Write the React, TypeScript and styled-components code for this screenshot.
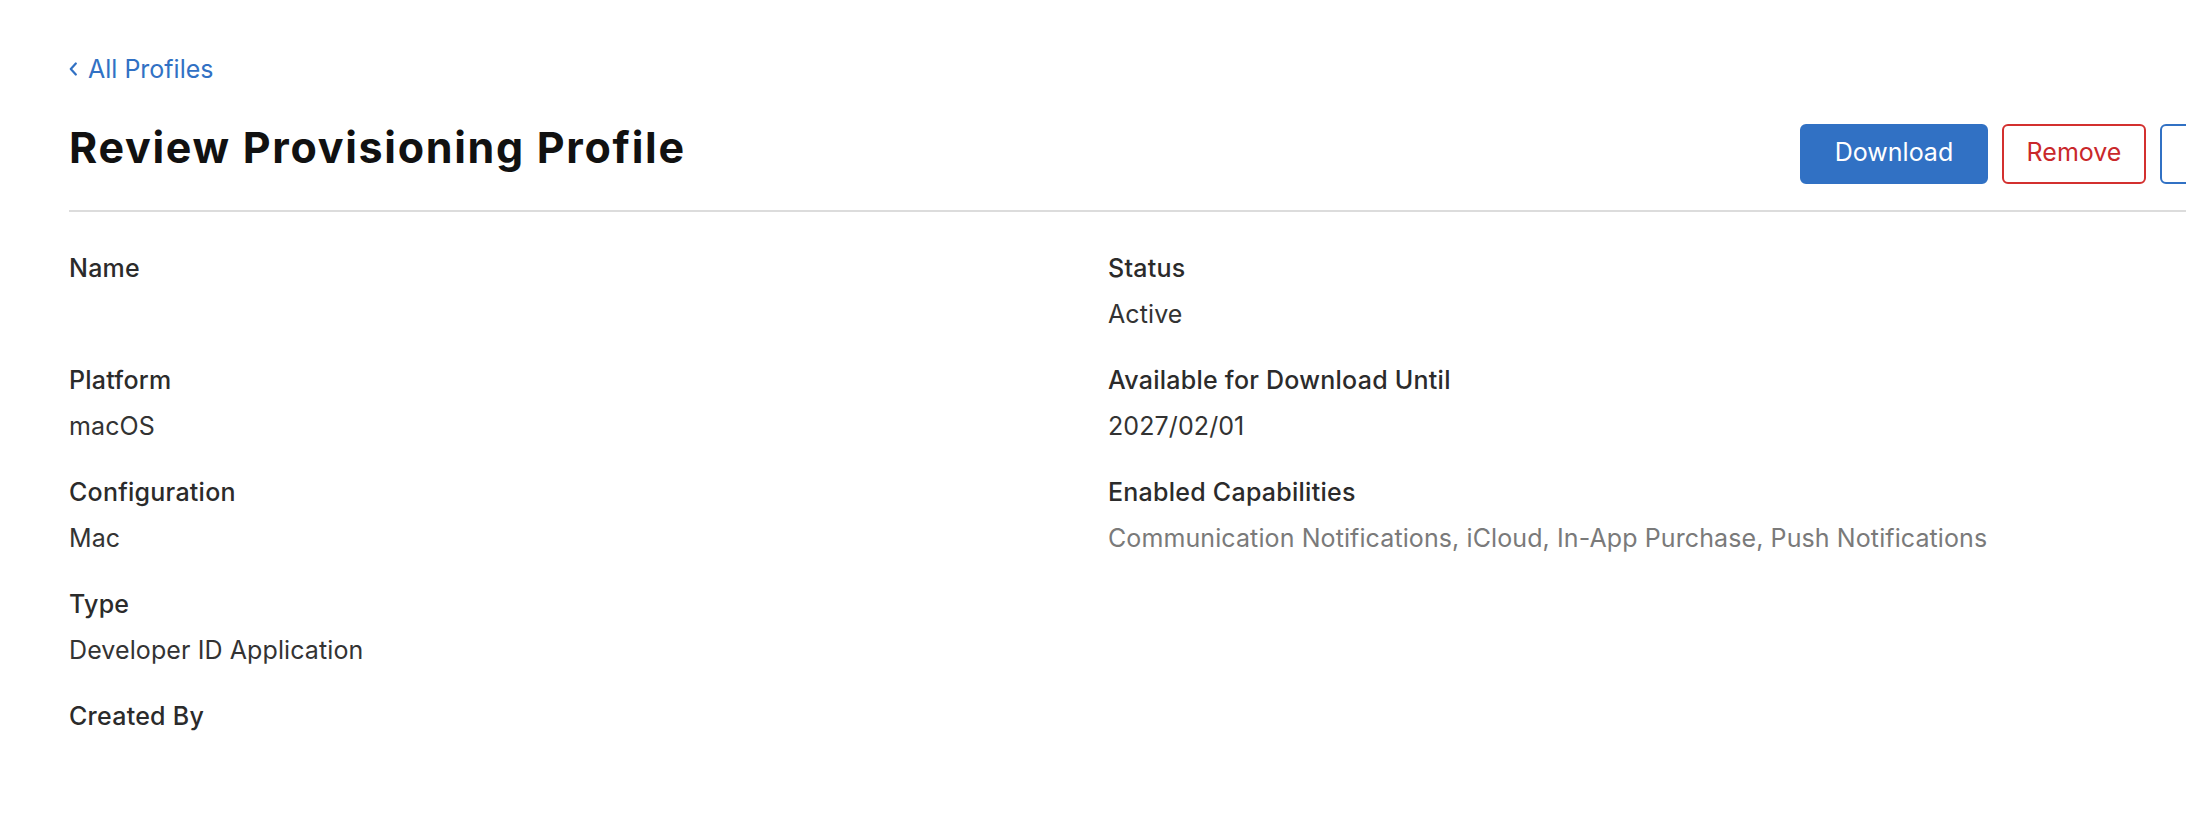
import React from "react";
import styled, { createGlobalStyle } from "styled-components";

const GlobalStyle = createGlobalStyle`
  html, body {
    margin: 0;
    padding: 0;
    background: #ffffff;
    overflow: hidden;
  }
  body {
    font-family: Inter, "Open Sans", "Liberation Sans", sans-serif;
    -webkit-font-smoothing: antialiased;
  }
`;

const Page = styled.main`
  box-sizing: border-box;
  width: 2300px;
  padding: 54px 30px 0 69px;
`;

const BackLink = styled.a`
  display: inline-flex;
  align-items: center;
  gap: 11px;
  height: 30px;
  font-size: 25px;
  line-height: 30px;
  color: #3171c4;
  text-decoration: none;
  cursor: pointer;
`;

const Header = styled.header`
  display: flex;
  align-items: flex-start;
  justify-content: space-between;
  margin-top: 38px;
  padding-bottom: 26px;
  border-bottom: 2px solid #dcdcdc;
`;

const Title = styled.h1`
  margin: 0;
  font-size: 43px;
  line-height: 50px;
  font-weight: 700;
  color: #111111;
  letter-spacing: 1.7px;
`;

const Actions = styled.div`
  display: flex;
  gap: 14px;
  margin-top: 2px;
`;

type Variant = "primary" | "danger" | "outline";

const colors: Record<Variant, { bg: string; border: string; fg: string }> = {
  primary: { bg: "#3171c4", border: "#3171c4", fg: "#ffffff" },
  danger: { bg: "#ffffff", border: "#d3302f", fg: "#c9282b" },
  outline: { bg: "#ffffff", border: "#3171c4", fg: "#3171c4" },
};

const Button = styled.button<{ $variant: Variant; $width: number }>`
  box-sizing: border-box;
  width: ${(p) => p.$width}px;
  height: 60px;
  padding: 0 0 3px;
  border-radius: 6px;
  border: 2px solid ${(p) => colors[p.$variant].border};
  background: ${(p) => colors[p.$variant].bg};
  color: ${(p) => colors[p.$variant].fg};
  font-family: inherit;
  font-size: 25px;
  line-height: 53px;
  cursor: pointer;
`;

const Details = styled.section`
  display: grid;
  grid-template-columns: 1039px 1fr;
  padding-top: 33px;
`;

const Column = styled.div`
  display: flex;
  flex-direction: column;
  gap: 20px;
`;

const Field = styled.div`
  display: flex;
  flex-direction: column;
`;

const Label = styled.div`
  font-size: 25px;
  line-height: 46px;
  height: 46px;
  color: #2b2b2b;
  font-weight: 500;
  letter-spacing: 0.25px;
`;

const Value = styled.div<{ $muted?: boolean }>`
  font-size: 25px;
  line-height: 46px;
  height: 46px;
  color: ${(p) => (p.$muted ? "#7a7a7a" : "#333333")};
  letter-spacing: 0.1px;
  white-space: nowrap;
`;

const Chevron = () => (
  <svg width="8" height="14" viewBox="0 0 8 14" aria-hidden="true">
    <polyline
      points="6.8,1.5 1.8,7 6.8,12.5"
      fill="none"
      stroke="#3171c4"
      strokeWidth="2.2"
      strokeLinecap="round"
      strokeLinejoin="round"
    />
  </svg>
);

type Item = { label: string; value?: string; muted?: boolean };

const left: Item[] = [
  { label: "Name", value: "" },
  { label: "Platform", value: "macOS" },
  { label: "Configuration", value: "Mac" },
  { label: "Type", value: "Developer ID Application" },
  { label: "Created By", value: "" },
];

const right: Item[] = [
  { label: "Status", value: "Active" },
  { label: "Available for Download Until", value: "2027/02/01" },
  {
    label: "Enabled Capabilities",
    value: "Communication Notifications, iCloud, In-App Purchase, Push Notifications",
    muted: true,
  },
];

const FieldList = ({ items }: { items: Item[] }) => (
  <Column>
    {items.map((it) => (
      <Field key={it.label}>
        <Label>{it.label}</Label>
        <Value $muted={it.muted}>{it.value}</Value>
      </Field>
    ))}
  </Column>
);

export default function App() {
  return (
    <>
      <GlobalStyle />
      <Page>
        <BackLink>
          <Chevron />
          All Profiles
        </BackLink>
        <Header>
          <Title>Review Provisioning Profile</Title>
          <Actions>
            <Button $variant="primary" $width={188}>Download</Button>
            <Button $variant="danger" $width={144}>Remove</Button>
            <Button $variant="outline" $width={110}>Edit</Button>
          </Actions>
        </Header>
        <Details>
          <FieldList items={left} />
          <FieldList items={right} />
        </Details>
      </Page>
    </>
  );
}
